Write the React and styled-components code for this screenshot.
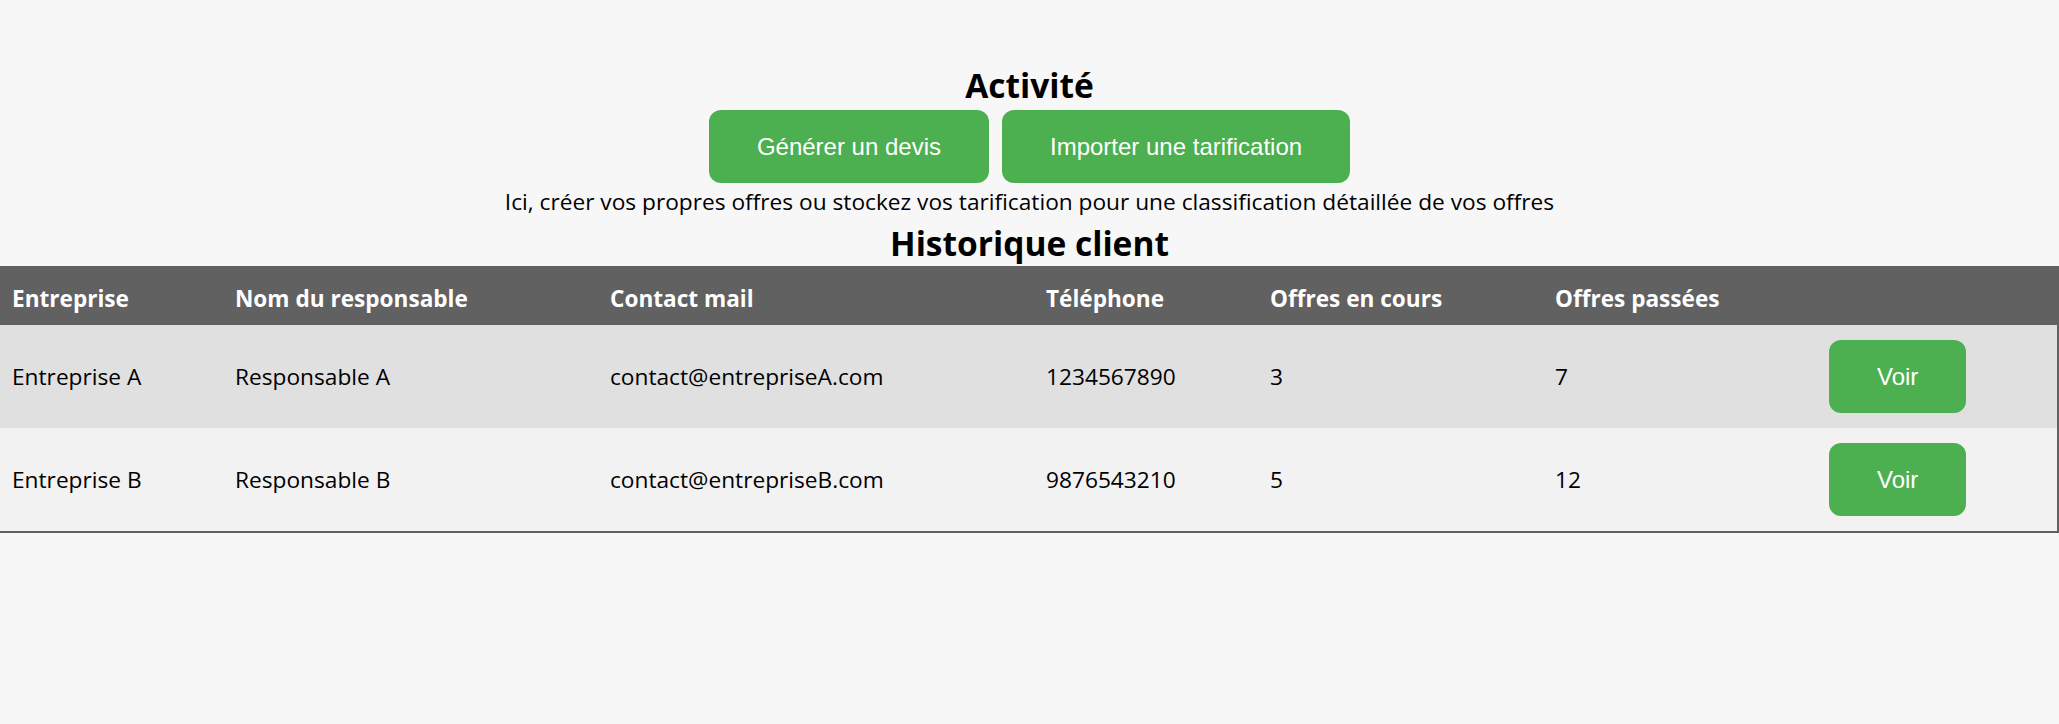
import React from "react";
import styled, { createGlobalStyle } from "styled-components";

const GlobalStyle = createGlobalStyle`
  html, body {
    margin: 0;
    padding: 0;
    background: #f7f7f7;
  }
  body {
    font-family: "Open Sans", "Noto Sans", sans-serif;
    color: #000;
  }
`;

const Page = styled.div`
  display: flex;
  flex-direction: column;
  align-items: center;
  padding-top: 65px;
`;

const Title = styled.h2`
  margin: 0;
  font-size: 33.5px;
  line-height: 40px;
  font-weight: 700;
  text-align: center;
`;

const Actions = styled.div`
  display: flex;
  gap: 13px;
  margin-top: 5px;
`;

const GreenButton = styled.button`
  background: #4caf50;
  color: #fff;
  border: none;
  border-radius: 12px;
  padding: 22.5px 48px;
  font-family: "Liberation Sans", Arial, sans-serif;
  font-size: 24px;
  line-height: 28px;
  cursor: pointer;
`;

const Intro = styled.p`
  margin: 5px 0 7px;
  font-size: 22.7px;
  line-height: 28px;
  text-align: center;
`;

const Table = styled.table`
  width: 100%;
  margin-top: 3px;
  table-layout: fixed;
  border-collapse: separate;
  border-spacing: 0;
  border: 2px solid #616161;
  border-left: 0;
`;

const Column = styled.col`
  width: ${(p) => p.$w}px;
`;

const HeadCell = styled.th`
  background: #616161;
  color: #fff;
  text-align: left;
  font-size: 22.6px;
  line-height: 27px;
  font-weight: 700;
  padding: 17px 12px 13px;
`;

const Row = styled.tr`
  background: ${(p) => (p.$odd ? "#e0e0e0" : "#f2f2f2")};
`;

const Cell = styled.td`
  font-size: 22.7px;
  line-height: 27px;
  padding: 15px 12px;
  vertical-align: middle;
`;

const widths = [223, 375, 436, 224, 285, 274, 240];

const headers = [
  "Entreprise",
  "Nom du responsable",
  "Contact mail",
  "Téléphone",
  "Offres en cours",
  "Offres passées",
  "",
];

const clients = [
  {
    company: "Entreprise A",
    manager: "Responsable A",
    mail: "contact@entrepriseA.com",
    phone: "1234567890",
    current: 3,
    past: 7,
  },
  {
    company: "Entreprise B",
    manager: "Responsable B",
    mail: "contact@entrepriseB.com",
    phone: "9876543210",
    current: 5,
    past: 12,
  },
];

export default function App() {
  return (
    <>
      <GlobalStyle />
      <Page>
        <Title>Activité</Title>
        <Actions>
          <GreenButton>Générer un devis</GreenButton>
          <GreenButton>Importer une tarification</GreenButton>
        </Actions>
        <Intro>
          Ici, créer vos propres offres ou stockez vos tarification pour une
          classification détaillée de vos offres
        </Intro>
        <Title>Historique client</Title>
        <Table>
          <colgroup>
            {widths.map((w, i) => (
              <Column key={i} $w={w} />
            ))}
          </colgroup>
          <thead>
            <tr>
              {headers.map((h, i) => (
                <HeadCell key={i}>{h}</HeadCell>
              ))}
            </tr>
          </thead>
          <tbody>
            {clients.map((c, i) => (
              <Row key={c.company} $odd={i % 2 === 0}>
                <Cell>{c.company}</Cell>
                <Cell>{c.manager}</Cell>
                <Cell>{c.mail}</Cell>
                <Cell>{c.phone}</Cell>
                <Cell>{c.current}</Cell>
                <Cell>{c.past}</Cell>
                <Cell>
                  <GreenButton>Voir</GreenButton>
                </Cell>
              </Row>
            ))}
          </tbody>
        </Table>
      </Page>
    </>
  );
}
